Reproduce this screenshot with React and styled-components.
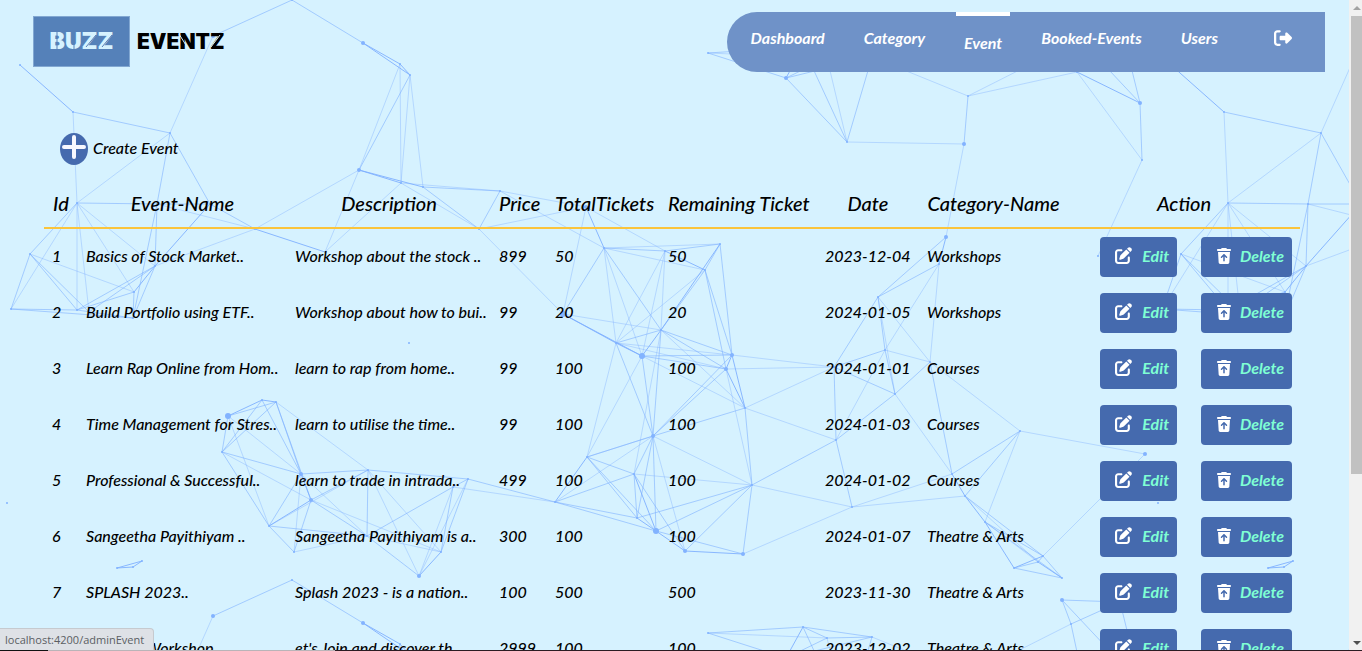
import React from "react";
import styled, { createGlobalStyle } from "styled-components";
import { FaPenToSquare, FaRightFromBracket, FaTrashArrowUp } from "react-icons/fa6";

const GlobalStyle = createGlobalStyle`
  * { box-sizing: border-box; }
  html, body, #root { height: 100%; }
  body {
    margin: 0;
    overflow: hidden;
    background: #d6f2ff;
    color: #000;
    font: italic 500 16px/24px Lato, sans-serif;
  }
`;

const Window = styled.div`
  display: flex;
  height: 100%;
  overflow: hidden;
`;

const Page = styled.div`
  position: relative;
  flex: 1;
  min-width: 0;
  overflow: hidden;
`;

const Backdrop = styled.svg`
  position: absolute;
  inset: 0;
  width: 100%;
  height: 100%;
  pointer-events: none;
`;

const Header = styled.header`
  position: relative;
  display: flex;
  justify-content: space-between;
  align-items: flex-start;
  padding: 12px 24px 0 33px;
`;

const Brand = styled.a`
  position: relative;
  display: flex;
  align-items: center;
  gap: 7px;
  margin-top: 4px;
  color: #000;
  font: normal 900 21px/51px Inter, sans-serif;
  text-decoration: none;
`;

const BrandBox = styled.span`
  width: 97px;
  text-align: center;
  background: #5581b9;
  border: 1px solid #82a8d2;
  color: #d6f2ff;
  font-size: 23px;
  line-height: 49px;
`;

const StencilCuts = styled.svg`
  position: absolute;
  left: 0;
  top: 0;
`;

const Nav = styled.nav`
  display: flex;
  align-items: flex-start;
  gap: 23px;
  height: 60px;
  padding: 0 25px 0 16px;
  border-radius: 30px 0 0 30px;
  background: #6f92c8;
`;

const NavLink = styled.a`
  display: flex;
  align-items: center;
  height: ${(p) => (p.$active ? 58 : 52)}px;
  padding: 0 8px;
  border-top: ${(p) => (p.$active ? "4px solid #fff" : "0")};
  margin-left: ${(p) => (p.$spaced ? 17 : 0)}px;
  color: #fff;
  font-weight: 700;
  text-decoration: none;
`;

const Main = styled.main`
  position: relative;
  padding: 60px 49px 0 44px;
`;

const CreateLink = styled.a`
  display: flex;
  align-items: center;
  gap: 5px;
  width: fit-content;
  height: 34px;
  margin-left: 16px;
  color: #000;
  text-decoration: none;
`;

const CreateLabel = styled.span`
  padding-bottom: 2px;
`;

const EventTable = styled.table`
  width: 100%;
  margin-top: 13px;
  table-layout: fixed;
  border-spacing: 0;
`;

const HeadCell = styled.th`
  height: 50px;
  padding: 0 8px;
  border-bottom: 2px solid #fac43c;
  font-size: 20px;
  font-weight: 500;
  text-align: center;
  white-space: nowrap;
`;

const Cell = styled.td`
  height: 56px;
  padding: 0 8px 2px;
  white-space: nowrap;
`;

const ActionCell = styled(Cell)`
  padding-bottom: 0;
`;

const Actions = styled.div`
  display: flex;
  justify-content: flex-end;
  gap: 24px;
`;

const ActionButton = styled.button`
  display: flex;
  align-items: center;
  justify-content: space-between;
  width: ${(p) => p.$width}px;
  height: 40px;
  padding: 0 8px 3px 15px;
  border: 0;
  border-radius: 4px;
  background: #456aae;
  color: #7fffd4;
  font: italic 700 16px/24px Lato, sans-serif;

  svg { color: #fff; }
`;

const Scrollbar = styled.div`
  display: flex;
  flex-direction: column;
  width: 13px;
  padding-left: 2px;
  background: #f1f1f1;
`;

const ScrollArrow = styled.svg`
  flex: none;
  width: 11px;
  height: 16px;
`;

const Track = styled.div`
  flex: 1;
`;

const Thumb = styled.div`
  height: 74%;
  background: #c1c1c1;
`;

const StatusBubble = styled.div`
  position: absolute;
  left: 0;
  bottom: 0;
  height: 23px;
  padding: 0 9px 0 5px;
  border: 1px solid #c6cacf;
  border-width: 1px 1px 0 0;
  border-radius: 0 4px 0 0;
  background: #dee1e6;
  color: #5a5e63;
  font: normal 400 11px/22px "Open Sans", sans-serif;
`;

const BottomEdge = styled.div`
  position: absolute;
  left: 0;
  right: 0;
  bottom: 0;
  height: 1px;
  background: linear-gradient(90deg, #111 0 48px, #b9b4b8 48px 335px, #2b1c22 335px);
`;

const nodes = {
  a: [20, 65, 1], b: [73, 112, 1], c: [170, 133, 1], d: [213, 36, 2], e: [292, 0, 1],
  f: [363, 43, 2], g: [400, 64, 1], h: [410, 75, 1], i: [359, 170, 2], j: [401, 183, 1],
  k: [423, 187, 1], l: [500, 191, 1], m: [479, 229, 1], n: [325, 252, 1], o: [255, 229, 1],
  p: [77, 203, 1], q: [157, 204, 1], q2: [210, 204, 1], r: [30, 254, 1], s: [11, 309, 1],
  t: [77, 310, 1], t2: [89, 312, 1], u: [134, 292, 1], v: [133, 318, 1], w: [155, 266, 1],
  A: [586, 207, 2], B: [604, 248, 1], C: [665, 251, 1], D: [720, 244, 1], E: [705, 270, 1],
  F: [563, 314, 3], G: [616, 343, 1], H: [642, 356, 3], I: [661, 330, 1], J: [732, 355, 2],
  K: [726, 369, 2], L: [745, 408, 1], M: [653, 436, 2], N: [587, 457, 1], O: [634, 474, 1],
  P: [637, 518, 1], Q: [656, 531, 3], R: [685, 551, 2], S: [743, 554, 2], T: [752, 485, 1],
  U: [834, 367, 1], V: [836, 440, 1], W: [852, 507, 1], X: [555, 502, 1],
  Y: [878, 297, 1], Z: [946, 237, 2], aa: [939, 264, 1], ab: [885, 350, 1], ac: [895, 394, 1],
  ad: [930, 362, 1], ae: [1020, 431, 1], af: [952, 474, 1], ag: [965, 496, 1], ah: [985, 522, 1],
  ai: [1014, 568, 1], aj: [1043, 556, 1], ak: [1062, 578, 1], al: [1038, 562, 1], am: [1145, 454, 2],
  an: [964, 144, 2], ao: [968, 96, 1], ap: [847, 142, 1], aq: [786, 78, 2], ar: [708, 53, 1],
  as: [803, 47, 1], at: [827, 58, 1], au: [872, 57, 1], av: [1062, 20, 2], aw: [1071, 44, 1],
  ax: [1077, 72, 1], ay: [1140, 103, 2], az: [1142, 160, 1], ba: [1120, 22, 1], bb: [1098, 256, 1],
  ca: [228, 416, 3], cb: [262, 400, 1], cc: [276, 402, 1], cd: [222, 452, 1], ce: [301, 474, 2],
  cf: [311, 500, 2], cg: [269, 526, 1], ch: [294, 552, 1], ci: [368, 470, 1], cj: [367, 536, 1],
  ck: [419, 576, 2], cl: [441, 552, 1], cm: [453, 487, 1], cn: [468, 479, 1],
  da: [117, 568, 1], db: [142, 561, 1], dc: [133, 567, 1], dd: [409, 343, 1], de: [7, 503, 1],
};

const strongEdges =
  "f-g f-h g-h i-k i-j D-I C-E F-H G-H H-I P-Q Q-R O-Q F-G J-K J-L K-L q2-w o-n a-b u-w ax-ay af-ag ag-ah ah-ai ai-aj Z-aa ce-cf cf-cg ca-cb cb-cc ck-cl R-S A-B da-db da-dc db-dc al-ak aq-as N-X";
const mediumEdges =
  "d-e e-f b-c h-i c-q c-q2 p-q q-q2 q2-o l-m k-m k-l p-r r-s r-t r-t2 s-t s-v t-v t-w t2-w t-u u-v v-w q-w q-v B-C C-D B-F B-I E-I D-E D-J E-J E-K G-I G-M H-J H-K H-M I-J I-K I-M J-M K-M L-T L-M M-N M-O M-P M-Q N-O N-P N-Q O-X O-P O-R P-T Q-T Q-X P-X Q-S R-T S-T Y-Z Y-aa Y-U Y-ab U-ac U-ab U-V ac-V ac-ad V-W T-V an-ao ap-aq ap-as ap-au ar-aq ar-as aq-at aq-au as-at at-au as-au ay-az ay-av ay-ba av-ba av-aw aw-ba ax-aw ae-af ae-ag ah-aj ah-ak ag-aj aj-ak ai-ak ai-al ab-ac ad-af ca-cd ca-cc cd-cb cd-cc cd-ce cd-cg cb-ce cc-ce cc-cf ce-cg cg-ch cf-ch ce-ci cf-ci cf-cj cj-ck cj-cm ci-cj ci-cn cm-cn cl-cm cl-cn cn-X cg-cj aj-al";
const faintEdges =
  "c-d b-p c-p g-i g-j h-j h-k i-o i-n j-l j-m j-n l-A l-B m-A m-F q-o o-w p-t p-t2 p-u p-w r-u A-F A-C B-D B-E B-G B-H C-G C-H C-I E-G F-I G-J G-K H-L I-L G-N H-N I-O J-U K-U L-U L-V M-T M-X M-R O-T N-M K-T T-W S-W Z-an an-ap ap-at ao-au ao-ax ao-aw ax-az az-bb Y-ad Y-ac aa-ad aa-ab ad-ab ab-V ac-af ad-ae ae-ah ae-am aj-am W-af W-ag ar-at al-ah ca-ce ca-cg cd-cf ce-ch ce-cj cf-cl ch-cj cg-ci ci-ck ci-cl cj-cl ck-cm ck-cn X-cm cc-ci p-s ag-al";

const toPath = (edges) =>
  edges
    .split(" ")
    .map((edge) => {
      const [from, to] = edge.split("-").map((name) => nodes[name]);
      return `M${from[0]} ${from[1]}L${to[0]} ${to[1]}`;
    })
    .join("");

const tileOffsets = [[0, 0], [1151, 0], [0, 580], [1151, 580]];

function ConstellationBackdrop() {
  return (
    <Backdrop aria-hidden="true">
      <defs>
        <g id="constellation" fill="none" stroke="#7fb0ff">
          <path d={toPath(strongEdges)} strokeOpacity="0.9" />
          <path d={toPath(mediumEdges)} strokeOpacity="0.6" />
          <path d={toPath(faintEdges)} strokeOpacity="0.4" />
          <g fill="#82b3ff" stroke="none">
            {Object.entries(nodes).map(([name, [x, y, r]]) => (
              <circle key={name} cx={x} cy={y} r={r} />
            ))}
          </g>
        </g>
      </defs>
      {tileOffsets.map(([x, y]) => (
        <use key={`${x}-${y}`} href="#constellation" x={x} y={y} />
      ))}
    </Backdrop>
  );
}

const links = ["Dashboard", "Category", "Event", "Booked-Events", "Users"];

const columns = [
  ["Id", 34], ["Event-Name", 209], ["Description", 204], ["Price", 56], ["TotalTickets", 113],
  ["Remaining Ticket", 157], ["Date", 102], ["Category-Name", 149], ["Action", 232],
];

const events = [
  [1, "Basics of Stock Market..", "Workshop about the stock ..", 899, 50, 50, "2023-12-04", "Workshops"],
  [2, "Build Portfolio using ETF..", "Workshop about how to bui..", 99, 20, 20, "2024-01-05", "Workshops"],
  [3, "Learn Rap Online from Hom..", "learn to rap from home..", 99, 100, 100, "2024-01-01", "Courses"],
  [4, "Time Management for Stres..", "learn to utilise the time..", 99, 100, 100, "2024-01-03", "Courses"],
  [5, "Professional & Successful..", "learn to trade in intrada..", 499, 100, 100, "2024-01-02", "Courses"],
  [6, "Sangeetha Payithiyam ..", "Sangeetha Payithiyam is a..", 300, 100, 100, "2024-01-07", "Theatre & Arts"],
  [7, "SPLASH 2023..", "Splash 2023 - is a nation..", 100, 500, 500, "2023-11-30", "Theatre & Arts"],
  [8, "Drawing Workshop..", "et's Join and discover th..", 2999, 100, 100, "2023-12-02", "Theatre & Arts"],
];

export default function App() {
  return (
    <>
      <GlobalStyle />
      <Window>
        <Page>
          <ConstellationBackdrop />
          <Header>
            <Brand href="#home">
              <BrandBox>BUZZ</BrandBox>
              <span>EVENTZ</span>
              <StencilCuts width="200" height="51" aria-hidden="true">
                <path d="M24 15V35M41 15V35M53 31L63 19M69 31L79 19" stroke="#5581b9" />
                <path d="M146 18L156 34M178 31L187 19" stroke="#d6f2ff" />
              </StencilCuts>
            </Brand>
            <Nav>
              {links.map((label) => (
                <NavLink key={label} href={`#${label}`} $active={label === "Event"}>
                  {label}
                </NavLink>
              ))}
              <NavLink href="#logout" aria-label="Log out" $spaced>
                <FaRightFromBracket size={18} />
              </NavLink>
            </Nav>
          </Header>
          <Main>
            <CreateLink href="#create">
              <svg width="28" height="32" aria-hidden="true">
                <ellipse cx="14" cy="16" rx="14" ry="16" fill="#456aae" />
                <path d="M14 4V24M4 14H24" stroke="#f7f8ff" strokeWidth="4" strokeLinecap="round" />
              </svg>
              <CreateLabel>Create Event</CreateLabel>
            </CreateLink>
            <EventTable>
              <colgroup>
                {columns.map(([label, width]) => (
                  <col key={label} width={width} />
                ))}
              </colgroup>
              <thead>
                <tr>
                  {columns.map(([label]) => (
                    <HeadCell key={label} scope="col">{label}</HeadCell>
                  ))}
                </tr>
              </thead>
              <tbody>
                {events.map((event) => (
                  <tr key={event[0]}>
                    {event.map((value, index) => (
                      <Cell key={columns[index][0]}>{value}</Cell>
                    ))}
                    <ActionCell>
                      <Actions>
                        <ActionButton type="button" $width={77}>
                          <FaPenToSquare size={17} />
                          Edit
                        </ActionButton>
                        <ActionButton type="button" $width={91}>
                          <FaTrashArrowUp size={16} />
                          Delete
                        </ActionButton>
                      </Actions>
                    </ActionCell>
                  </tr>
                ))}
              </tbody>
            </EventTable>
          </Main>
          <StatusBubble>localhost:4200/adminEvent</StatusBubble>
        </Page>
        <Scrollbar aria-hidden="true">
          <ScrollArrow><path d="M2 10L6 6L10 10Z" fill="#a3a3a3" /></ScrollArrow>
          <Track><Thumb /></Track>
          <ScrollArrow><path d="M2 6L6 10L10 6Z" fill="#505050" /></ScrollArrow>
        </Scrollbar>
        <BottomEdge />
      </Window>
    </>
  );
}
